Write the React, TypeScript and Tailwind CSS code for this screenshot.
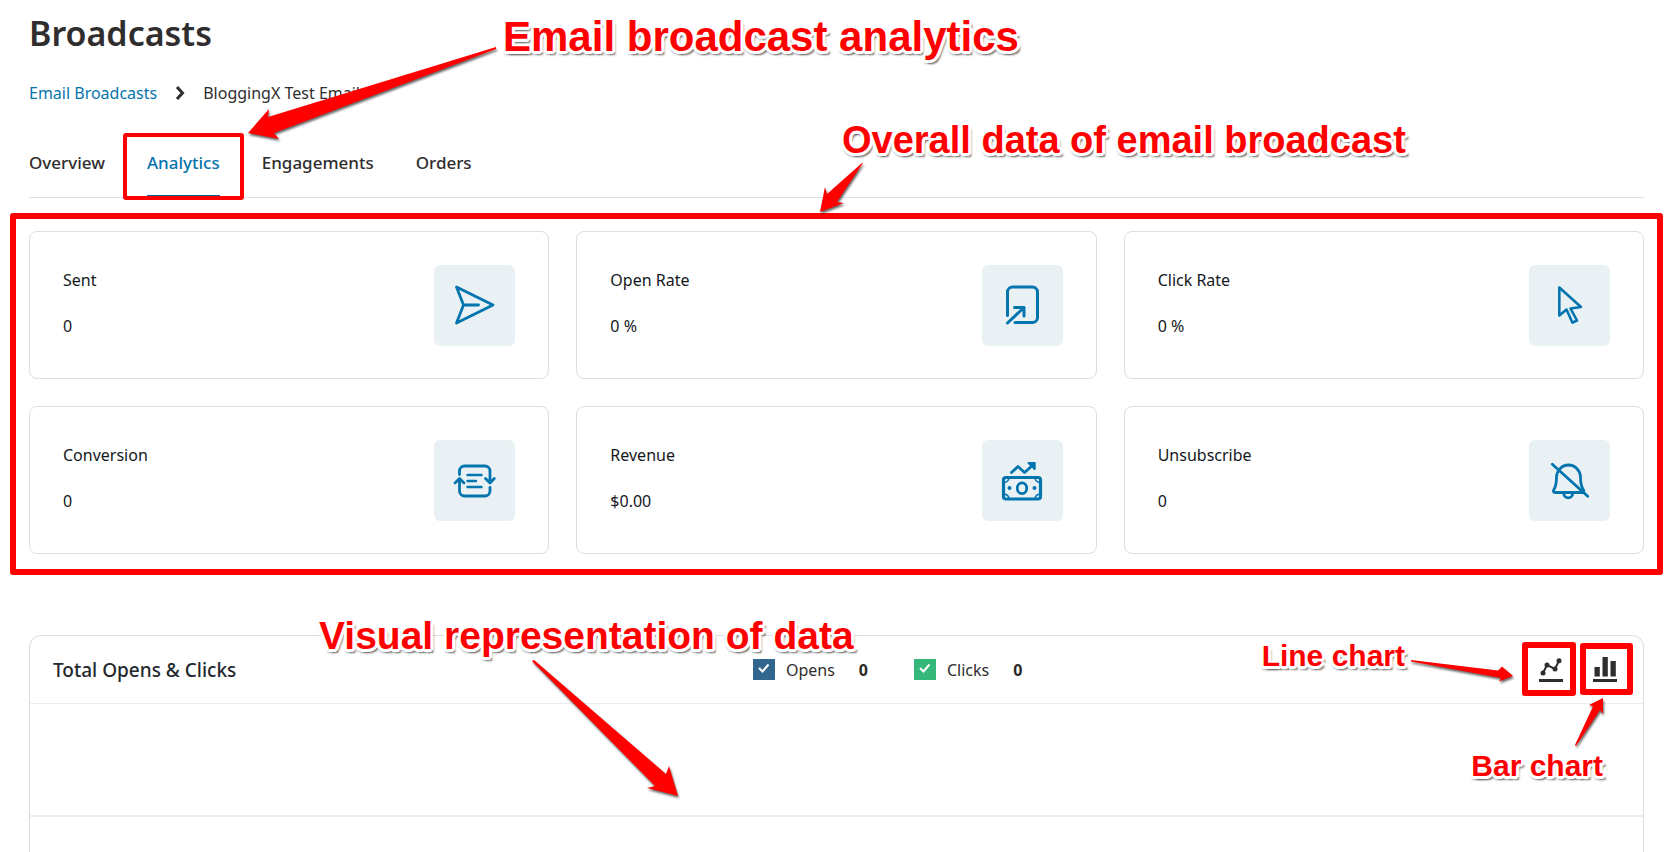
import { useState } from 'react';
import type { ReactNode } from 'react';

const stroke = {
  fill: 'none',
  stroke: '#0274ae',
  strokeWidth: 3,
  strokeLinecap: 'round',
  strokeLinejoin: 'round',
} as const;

const SendIcon = () => (
  <g {...stroke} strokeWidth={2.8}>
    <path d="M22.5 22 59 40 22.5 58 29.5 40Z M29.5 40H44.5" />
  </g>
);

const OpenIcon = () => (
  <g {...stroke}>
    <path d="M25.5 50.5V27a5 5 0 0 1 5-5h20a5 5 0 0 1 5 5v25.500a5 5 0 0 1-5 5H33" />
    <path d="M25.500 58 42 42.500 M32.500 42.500H42V51" />
  </g>
);

const ClickIcon = () => (
  <g {...stroke} strokeWidth={2.6}>
    <path d="M30.300 22.500 52 42 41.500 43.500 48 55.500 43.500 57.700 37.500 44.500 30.300 50.500Z" />
  </g>
);

const ConversionIcon = () => (
  <g {...stroke} strokeWidth={2.8}>
    <path d="M25.500 34.500V31a5 5 0 0 1 5-5H51a5 5 0 0 1 5 5V42 M51.500 38.500 56 43 60.300 38.500" />
    <path d="M56 47.500V51a5 5 0 0 1-5 5H30.500a5 5 0 0 1-5-5V39.500 M21 43 25.500 38.500 30 43" />
    <path d="M33.500 35H47.500 M33.500 41H42 M33.500 47H47.500" strokeWidth={2.4} />
  </g>
);

const RevenueIcon = () => (
  <g {...stroke} strokeWidth={2.8}>
    <path d="M29.500 32.500 36 26.500 42.500 32.500 51 25" />
    <path d="M46.500 23H52.700V29Z" fill="#0274ae" strokeWidth={2} />
    <rect x="21.500" y="37.500" width="37" height="21.500" rx="2.500" strokeWidth={3.2} />
    <path d="M22 42.500Q26.500 42 27 38 M53 38Q53.500 42 58 42.500 M22 54Q26.500 54.500 27 58.500 M53 58.500Q53.500 54.500 58 54" strokeWidth={1.6} />
    <ellipse cx="40" cy="48.200" rx="4.700" ry="5.400" />
    <circle cx="27.500" cy="48" r="2" fill="#0274ae" stroke="none" />
    <circle cx="52.500" cy="48" r="2" fill="#0274ae" stroke="none" />
  </g>
);

const UnsubscribeIcon = () => (
  <g {...stroke} strokeWidth={2.8}>
    <path d="M27.500 37.500a12 12.500 0 0 1 24 0c0 6 .3 8.500 3 12.500.8 1.500.2 2.500-1 2.500H26c-1.500 0-2-1.200-1.300-2.500 2.500-4 2.800-6.500 2.800-12.500Z" />
    <path d="M34.800 53.500a4.400 4.400 0 0 0 8.800 0" />
    <path d="M23.300 24.300 58.700 56.300" />
  </g>
);

const stats = [
  { label: 'Sent', value: '0', icon: <SendIcon /> },
  { label: 'Open Rate', value: '0 %', icon: <OpenIcon /> },
  { label: 'Click Rate', value: '0 %', icon: <ClickIcon /> },
  { label: 'Conversion', value: '0', icon: <ConversionIcon /> },
  { label: 'Revenue', value: '$0.00', icon: <RevenueIcon /> },
  { label: 'Unsubscribe', value: '0', icon: <UnsubscribeIcon /> },
];

function StatCard({ label, value, icon }: { label: string; value: string; icon: ReactNode }) {
  return (
    <article className="flex items-start justify-between rounded-lg border border-[#dddde9] px-[33px] pt-[33px] pb-8">
      <div className="flex flex-col gap-[22px] pt-[3px] text-base leading-6 text-[#14171c]">
        <h2>{label}</h2>
        <p>{value}</p>
      </div>
      <svg viewBox="0 0 81 81" className="size-[81px] rounded-md bg-[#e9f1f5]" aria-hidden="true">
        {icon}
      </svg>
    </article>
  );
}

function Note({ className, children }: { className: string; children: ReactNode }) {
  return (
    <p
      className={`pointer-events-none absolute z-20 whitespace-nowrap font-['Liberation_Sans',Arial,sans-serif] font-bold text-[#ff0000] [text-shadow:2px_0_0_#fff,-2px_0_0_#fff,0_2px_0_#fff,0_-2px_0_#fff,2px_2px_0_#fff,-2px_2px_0_#fff,2px_-2px_0_#fff,-2px_-2px_0_#fff,3px_1px_0_#fff,-3px_1px_0_#fff,1px_3px_0_#fff,-1px_3px_0_#fff,3px_4px_2px_rgba(0,0,0,0.55),-1px_4px_2px_rgba(0,0,0,0.3)] ${className}`}
    >
      {children}
    </p>
  );
}

function Arrow({ className, viewBox, points }: { className: string; viewBox: string; points: string }) {
  return (
    <svg
      viewBox={viewBox}
      className={`pointer-events-none absolute z-20 overflow-visible drop-shadow-[1px_2px_1px_rgba(0,0,0,0.6)] ${className}`}
      aria-hidden="true"
    >
      <polygon points={points} fill="#ff0000" />
    </svg>
  );
}

function Frame({ className }: { className: string }) {
  return <span className={`pointer-events-none absolute z-10 rounded-[3px] border-[#ff0000] ${className}`} />;
}

function Series({ name, count, box }: { name: string; count: number; box: string }) {
  const [on, setOn] = useState(true);
  return (
    <div className="flex items-center">
      <label className="flex items-center gap-[11px]">
        <span className="relative flex">
          <input
            type="checkbox"
            checked={on}
            onChange={() => setOn(!on)}
            className={`h-[21px] w-[22px] appearance-none ${box}`}
          />
          {on && (
            <svg viewBox="0 0 22 21" className="pointer-events-none absolute inset-0 h-[21px] w-[22px]" aria-hidden="true">
              <path d="M6 9 9.500 12.500 15.500 5.500" fill="none" stroke="#fff" strokeWidth="2" />
            </svg>
          )}
        </span>
        {name}
      </label>
      <strong className="ml-6 font-bold text-[#2b2828]">{count}</strong>
    </div>
  );
}

const tabs = ['Overview', 'Analytics', 'Engagements', 'Orders'];

export default function App() {
  return (
    <div className="relative flex min-h-screen flex-col overflow-hidden bg-white pl-[29px] pr-[22px] font-['Noto_Sans','Open_Sans',sans-serif] text-base text-[#2f2d2d]">
      <h1 className="pt-2 text-[34px] leading-[50px] font-semibold">Broadcasts</h1>

      <nav aria-label="Breadcrumb" className="mt-[23px] flex items-center leading-6">
        <a href="#broadcasts" className="text-[#0674ac]">Email Broadcasts</a>
        <svg viewBox="0 0 10 16" className="mx-[18px] h-4 w-2.5" aria-hidden="true">
          <path d="M2 2 7.500 8 2 14" fill="none" stroke="#2f2d2d" strokeWidth="3" />
        </svg>
        <span>BloggingX Test Email</span>
      </nav>

      <nav aria-label="Broadcast sections" className="mt-[46px] flex gap-[42px] border-b border-[#dddde9] text-[17px]">
        {tabs.map((tab) => (
          <a
            key={tab}
            href={`#${tab.toLowerCase()}`}
            className={
              tab === 'Analytics'
                ? 'relative border-b-2 border-[#0f5f8c] pb-5 font-medium leading-6 text-[#0674ac]'
                : 'pb-[22px] font-medium leading-6'
            }
          >
            {tab}
            {tab === 'Analytics' && <Frame className="-inset-x-6 -top-[18px] -bottom-[5px] border-4" />}
          </a>
        ))}
      </nav>

      <section aria-label="Overall data" className="relative mt-[33px] grid grid-cols-3 gap-[27px]">
        {stats.map((s) => (
          <StatCard key={s.label} {...s} />
        ))}
        <Frame className="-left-[19px] -right-[19px] -top-[18px] -bottom-[21px] border-6" />
      </section>

      <section className="mt-[81px] flex flex-1 flex-col rounded-t-xl border border-b-0 border-[#dddde9]">
        <header className="flex h-[68px] items-center justify-between border-b border-[#ececee] pl-[23px] pr-[26px]">
          <h2 className="text-[19px] leading-6 font-medium text-[#23282d]">Total Opens &amp; Clicks</h2>
          <div className="flex items-center gap-[46px]">
            <Series name="Opens" count={0} box="bg-[#31678f]" />
            <Series name="Clicks" count={0} box="bg-[#35b779]" />
          </div>
          <div className="flex gap-[30px]">
            <button type="button" aria-label="Line chart" className="relative size-6">
              <svg viewBox="0 0 24 24" className="size-6 overflow-visible" fill="#2f2d2d" aria-hidden="true">
                <path d="M4 15 8 7 16 11 20 2.700" fill="none" stroke="#2f2d2d" strokeWidth="2" />
                <circle cx="4" cy="15" r="2.500" />
                <circle cx="8" cy="7" r="2.500" />
                <circle cx="16" cy="11" r="2.500" />
                <circle cx="20" cy="2.700" r="2.500" />
                <rect y="21" width="24" height="3" />
              </svg>
              <Frame className="-left-[17px] -top-4 size-[54px] border-6" />
            </button>
            <button type="button" aria-label="Bar chart" className="relative size-6">
              <svg viewBox="0 0 24 24" className="size-6 overflow-visible" fill="#2f2d2d" aria-hidden="true">
                <rect x="1.500" y="9" width="5.300" height="9.500" />
                <rect x="9.500" y="-1" width="5.300" height="19.500" />
                <rect x="17.500" y="3" width="5.300" height="15.500" />
                <rect y="21" width="24" height="3" />
              </svg>
              <Frame className="-left-[13px] -top-[15px] h-[52px] w-[53px] border-6" />
            </button>
          </div>
        </header>
        <div className="h-[113px] border-b-2 border-[#eeeef0]" />
      </section>

      <Note className="left-[503px] top-[14px] text-[42px] leading-[46px]">Email broadcast analytics</Note>
      <Arrow
        className="left-[248px] top-[47px] h-[92px] w-[248px]"
        viewBox="248 47 248 92"
        points="496,47 268,117 269,109 248,133 279,139 274,133 496,49"
      />
      <Note className="left-[842px] top-[119px] text-[38px] leading-[42px]">Overall data of email broadcast</Note>
      <Arrow
        className="left-[820px] top-[163px] h-[49px] w-[43px]"
        viewBox="820 163 43 49"
        points="862,163 827,194 825,187 820,212 844,203 837,202 863,163"
      />
      <Note className="left-[319px] top-[613px] text-[39px] leading-[46px]">Visual representation of data</Note>
      <Arrow
        className="left-[532px] top-[660px] h-[136px] w-[146px]"
        viewBox="532 660 146 136"
        points="532,661 534,660 666,774 669,766 678,796 647,788 655,786"
      />
      <Note className="right-[261px] top-[638px] text-[30px] leading-[36px]">Line chart</Note>
      <Arrow
        className="right-[153px] top-[660px] h-[22px] w-[102px]"
        viewBox="1411 660 102 22"
        points="1411,660 1498,670.5 1502,666.5 1513,676 1499,681.5 1501,678 1411,661.5"
      />
      <Note className="right-[63px] top-[748px] text-[30px] leading-[36px]">Bar chart</Note>
      <Arrow
        className="right-[63px] top-[698px] h-[48px] w-[28px]"
        viewBox="1575 698 28 48"
        points="1575,745 1593,706.5 1589,705 1603,698 1603,714 1600,710 1576,746"
      />
    </div>
  );
}
